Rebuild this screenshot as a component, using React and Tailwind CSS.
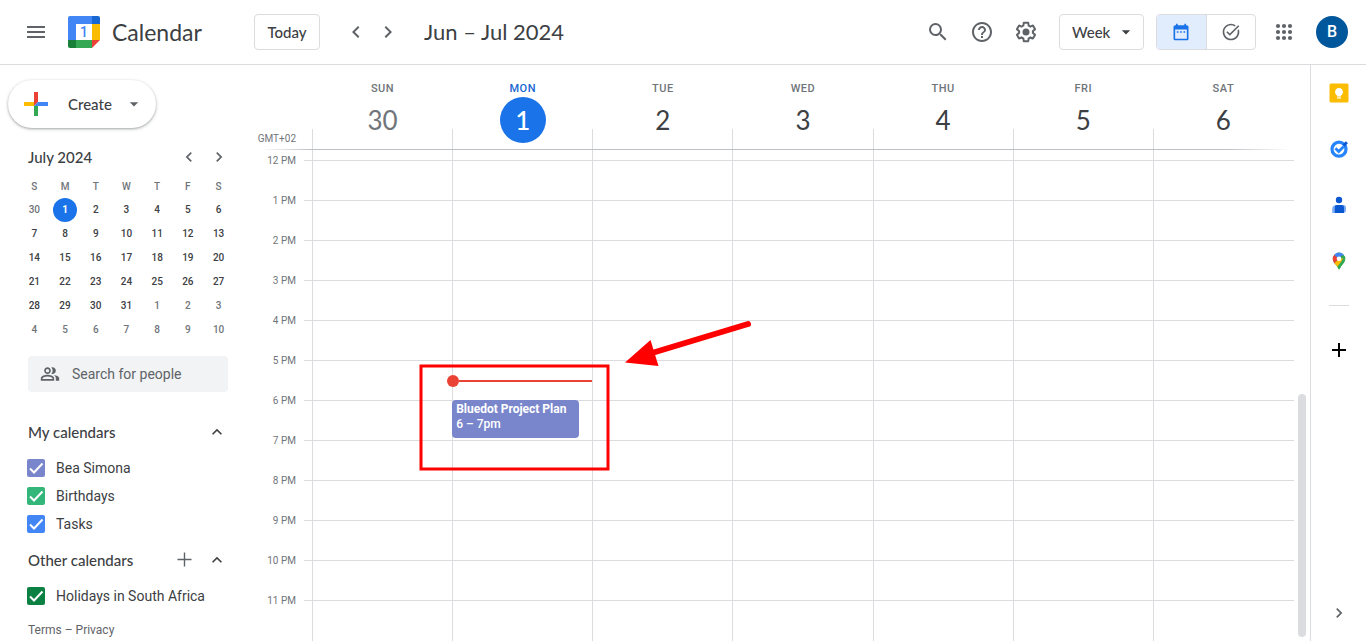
import React from "react";
import {
  MdMenu,
  MdSearch,
  MdHelpOutline,
  MdChevronLeft,
  MdChevronRight,
  MdArrowDropDown,
  MdDateRange,
  MdTaskAlt,
  MdOutlinePeopleAlt,
  MdKeyboardArrowUp,
  MdAdd,
} from "react-icons/md";

const brand = "font-['Lato','Open_Sans',sans-serif]";

const weekDays = [
  { name: "SUN", date: 30, past: true },
  { name: "MON", date: 1, today: true },
  { name: "TUE", date: 2 },
  { name: "WED", date: 3 },
  { name: "THU", date: 4 },
  { name: "FRI", date: 5 },
  { name: "SAT", date: 6 },
];

const hours = ["12 PM", "1 PM", "2 PM", "3 PM", "4 PM", "5 PM", "6 PM", "7 PM", "8 PM", "9 PM", "10 PM", "11 PM"];

const monthWeeks = [
  [30, 1, 2, 3, 4, 5, 6],
  [7, 8, 9, 10, 11, 12, 13],
  [14, 15, 16, 17, 18, 19, 20],
  [21, 22, 23, 24, 25, 26, 27],
  [28, 29, 30, 31, 1, 2, 3],
  [4, 5, 6, 7, 8, 9, 10],
];

const inMonth = (week, date) => !(week === 0 && date > 20) && !(week > 3 && date < 20);

function CalendarLogo() {
  return (
    <svg className="size-8" viewBox="0 0 32 32" aria-hidden="true">
      <path d="M2 0h22v8H8v16H0V2a2 2 0 0 1 2-2z" fill="#4285f4" />
      <path d="M24 0h6a2 2 0 0 1 2 2v6h-8z" fill="#1967d2" />
      <path d="M24 8h8v16h-8z" fill="#fbbc04" />
      <path d="M8 24h16v8H8z" fill="#34a853" />
      <path d="M0 24h8v8H2a2 2 0 0 1-2-2z" fill="#188038" />
      <path d="M24 24h8l-8 8z" fill="#ea4335" />
      <text x="16" y="21" textAnchor="middle" fontSize="14" fontFamily="Roboto, sans-serif" fontWeight="500" fill="#4285f4">
        1
      </text>
    </svg>
  );
}

function SettingsIcon() {
  return (
    <svg className="size-6" viewBox="0 0 24 24" fill="currentColor" aria-hidden="true">
      <path d="M13.85 22.25h-3.7c-.74 0-1.36-.54-1.45-1.27l-.27-1.89c-.27-.14-.53-.29-.79-.46l-1.8.72c-.7.26-1.47-.03-1.81-.65L2.2 15.53c-.35-.66-.2-1.44.36-1.88l1.53-1.19c-.01-.15-.02-.3-.02-.46 0-.15.01-.31.02-.46l-1.52-1.19c-.59-.45-.74-1.26-.37-1.88l1.85-3.19c.34-.62 1.11-.9 1.79-.63l1.81.73c.26-.17.52-.32.78-.46l.27-1.91c.09-.7.71-1.25 1.44-1.25h3.7c.74 0 1.36.54 1.45 1.27l.27 1.89c.27.14.53.29.79.46l1.8-.72c.71-.26 1.48.03 1.82.65l1.84 3.18c.36.66.2 1.44-.36 1.88l-1.52 1.19c.01.15.02.3.02.46s-.01.31-.02.46l1.52 1.19c.56.45.72 1.23.37 1.86l-1.86 3.22c-.34.62-1.11.9-1.8.63l-1.8-.72c-.26.17-.52.32-.78.46l-.27 1.91c-.1.68-.72 1.22-1.46 1.22zm-3.23-2h2.76l.37-2.55.53-.22c.44-.18.88-.44 1.34-.78l.45-.34 2.38.96 1.38-2.4-2.03-1.58.07-.56c.03-.26.06-.51.06-.78s-.03-.53-.06-.78l-.07-.56 2.03-1.58-1.39-2.4-2.39.96-.45-.35c-.42-.32-.87-.58-1.33-.77l-.52-.22-.37-2.55h-2.76l-.37 2.55-.53.21c-.44.19-.88.44-1.34.79l-.45.33-2.38-.95-1.39 2.39 2.03 1.58-.07.56a7 7 0 0 0-.06.79c0 .26.02.53.06.78l.07.56-2.03 1.58 1.38 2.4 2.39-.96.45.35c.43.33.86.58 1.33.77l.53.22.38 2.55z" />
      <circle cx="12" cy="12" r="3.5" />
    </svg>
  );
}

function AppsIcon() {
  return (
    <svg className="size-6" viewBox="0 0 24 24" fill="currentColor" aria-hidden="true">
      {[6, 12, 18].map((y) => [6, 12, 18].map((x) => <circle key={`${x}-${y}`} cx={x} cy={y} r="2.1" />))}
    </svg>
  );
}

function CreatePlus() {
  return (
    <svg className="size-6" viewBox="0 0 24 24" aria-hidden="true">
      <path d="M10 0h4v10l-4 4z" fill="#ea4335" />
      <path d="M0 10h10v4H0z" fill="#fbbc04" />
      <path d="M14 10h10v4H10z" fill="#4285f4" />
      <path d="M10 14h4v10h-4z" fill="#34a853" />
    </svg>
  );
}

function ThinPlus() {
  return (
    <svg className="size-5" viewBox="0 0 20 20" fill="none" stroke="currentColor" strokeWidth="1.4" aria-hidden="true">
      <path d="M9.500 2.500v14M2.500 9.500h14" />
    </svg>
  );
}

function KeepIcon() {
  return (
    <svg className="size-5" viewBox="0 0 20 20" aria-hidden="true">
      <rect x="0.5" y="0.5" width="19" height="19" rx="1.5" fill="#fbbc04" />
      <path d="M10 5a4 4 0 0 0-2 7.400v1h4v-1A4 4 0 0 0 10 5z" fill="#fff" />
      <path d="M8 14.300h4v1.200H8z" fill="#fff" />
    </svg>
  );
}

function TasksIcon() {
  return (
    <svg className="size-5" viewBox="0 0 20 20" fill="none" aria-hidden="true">
      <circle cx="10" cy="10.2" r="7" stroke="#2684fc" strokeWidth="3.2" />
      <path d="M6.400 9.200l3.300 3.300 5-5" stroke="#2684fc" strokeWidth="2.8" />
      <path d="M13.600 5.600l3.300-3.300 2 2-3.300 3.500z" fill="#0b57d0" />
    </svg>
  );
}

function ContactsIcon() {
  return (
    <svg className="size-5" viewBox="0 0 20 20" aria-hidden="true">
      <circle cx="10" cy="5" r="3.2" fill="#0b57d0" />
      <path d="M6.800 10H14a3 3 0 0 1 3 3v2.600a2.400 2.400 0 0 1-2.400 2.400H3.200v-4A4 4 0 0 1 6.800 10z" fill="#7baaf7" />
      <path d="M8.200 10h4.400a2.400 2.400 0 0 1 2.400 2.400V18H5.800v-5.600A2.400 2.400 0 0 1 8.200 10z" fill="#0b57d0" />
    </svg>
  );
}

function MapsIcon() {
  return (
    <svg className="size-5" viewBox="0 0 20 20" aria-hidden="true">
      <defs>
        <clipPath id="map-pin">
          <path d="M10 1.600a6.200 6.200 0 0 1 6.200 6.200c0 2-.9 3.400-2.100 4.900-1.600 2-2.600 3.200-3.300 5.100-.3.900-1.300.900-1.600 0-.7-1.900-1.700-3.100-3.300-5.100C4.700 11.200 3.800 9.800 3.800 7.800A6.200 6.200 0 0 1 10 1.600z" />
        </clipPath>
      </defs>
      <g clipPath="url(#map-pin)">
        <path d="M0 0h20v20H0z" fill="#34a853" />
        <path d="M10 8l-5.200 6L0 10V0l6 4z" fill="#ea4335" />
        <path d="M10 8l-5.500 5L8 16l7.500-9z" fill="#fbbc04" />
        <path d="M10 8L5 3.800 8 0h9l-1.500 4.200-3 .4z" fill="#4285f4" />
        <path d="M9.500 15.500L16 4l4 8-8 8z" fill="#34a853" />
      </g>
      <circle cx="10" cy="7.8" r="2.3" fill="#fff" />
    </svg>
  );
}

function Header() {
  return (
    <header className="flex h-[65px] shrink-0 items-center border-b border-[#dadce0] pr-[18px] text-[#5f6368]">
      <div className="flex w-[254px] shrink-0 items-center pl-3">
        <button className="flex size-12 items-center justify-center" aria-label="Main menu">
          <MdMenu className="size-6" />
        </button>
        <a href="#" className="ml-2 flex items-center gap-3">
          <CalendarLogo />
          <span className={`${brand} text-[23px] leading-7 text-[#3c4043]`}>Calendar</span>
        </a>
      </div>
      <button className={`${brand} h-9 w-[66px] rounded border border-[#dadce0] text-[15px] font-medium text-[#3c4043]`}>Today</button>
      <button className="ml-5 flex size-8 items-center justify-center" aria-label="Previous week">
        <MdChevronLeft className="size-6" />
      </button>
      <button className="flex size-8 items-center justify-center" aria-label="Next week">
        <MdChevronRight className="size-6" />
      </button>
      <h1 className={`${brand} ml-5 text-[22px] leading-7 whitespace-nowrap text-[#3c4043]`}>Jun – Jul 2024</h1>
      <div className="ml-auto flex items-center">
        <button className="flex h-12 w-11 items-center justify-center" aria-label="Search">
          <MdSearch className="size-6" />
        </button>
        <button className="flex h-12 w-11 items-center justify-center" aria-label="Support">
          <MdHelpOutline className="size-6" />
        </button>
        <button className="flex h-12 w-11 items-center justify-center" aria-label="Settings">
          <SettingsIcon />
        </button>
        <div className="ml-[11px] grid items-center">
          <select
            aria-label="View"
            defaultValue="Week"
            className={`${brand} col-start-1 row-start-1 h-9 w-[85px] appearance-none rounded border border-[#dadce0] bg-white pl-3 text-[15px] font-medium text-[#3c4043]`}
          >
            <option>Day</option>
            <option>Week</option>
            <option>Month</option>
          </select>
          <MdArrowDropDown className="pointer-events-none col-start-1 row-start-1 mr-2 size-5 justify-self-end text-[#3c4043]" />
        </div>
        <div className="ml-3 flex h-9 w-[100px] overflow-hidden rounded border border-[#dadce0]">
          <button className="flex flex-1 items-center justify-center border-r border-[#dadce0] bg-[#e1edfd] text-[#1a73e8]" aria-label="Calendar view">
            <MdDateRange className="size-5" />
          </button>
          <button className="flex flex-1 items-center justify-center" aria-label="Tasks view">
            <MdTaskAlt className="size-5" />
          </button>
        </div>
        <button className="ml-2 flex size-10 items-center justify-center" aria-label="Google apps">
          <AppsIcon />
        </button>
        <button className="ml-3 size-8 rounded-full bg-[#01579b] font-['Roboto',sans-serif] text-base leading-8 font-medium text-white" aria-label="Account">
          B
        </button>
      </div>
    </header>
  );
}

function MiniMonth() {
  return (
    <section className="mt-[15px]">
      <div className="flex h-7 items-center pr-[22px] pl-7">
        <h2 className={`${brand} text-[15px] font-medium text-[#3c4043]`}>July 2024</h2>
        <button className="ml-auto flex h-7 w-[30px] items-center justify-center" aria-label="Previous month">
          <MdChevronLeft className="size-5" />
        </button>
        <button className="flex h-7 w-[30px] items-center justify-center" aria-label="Next month">
          <MdChevronRight className="size-5" />
        </button>
      </div>
      <table className="mt-1 ml-[19px] w-[215px] table-fixed text-center text-[10px] leading-4 font-medium">
        <thead>
          <tr className="h-[23px] text-[#70757a]">
            {["S", "M", "T", "W", "T", "F", "S"].map((d, i) => (
              <th key={i} className="p-0 font-medium">
                {d}
              </th>
            ))}
          </tr>
        </thead>
        <tbody>
          {monthWeeks.map((week, w) => (
            <tr key={w}>
              {week.map((date) => (
                <td key={date} className="h-6 p-0">
                  <button
                    className={
                      w === 0 && date === 1
                        ? "mx-auto block size-6 rounded-full bg-[#1a73e8] font-bold text-white"
                        : inMonth(w, date)
                          ? "mx-auto block size-6 rounded-full text-[#3c4043]"
                          : "mx-auto block size-6 rounded-full text-[#70757a]"
                    }
                  >
                    {date}
                  </button>
                </td>
              ))}
            </tr>
          ))}
        </tbody>
      </table>
    </section>
  );
}

function CalendarToggle({ name, color }) {
  return (
    <label className="flex h-7 items-center gap-[11px] pl-[27px] text-sm text-[#3c4043]">
      <span className="grid size-[18px]">
        <input type="checkbox" defaultChecked className={`col-start-1 row-start-1 size-[18px] appearance-none rounded-xs ${color}`} />
        <svg className="pointer-events-none col-start-1 row-start-1 size-[18px]" viewBox="0 0 18 18" fill="none" aria-hidden="true">
          <path d="M3 9.500l4 4 8.500-9" stroke="#fff" strokeWidth="2" />
        </svg>
      </span>
      {name}
    </label>
  );
}

function Sidebar() {
  return (
    <aside className="w-64 shrink-0 text-[#5f6368]">
      <button className={`${brand} mt-[15px] ml-2 flex h-12 w-[148px] items-center rounded-full pl-4 text-[15px] font-medium text-[#3c4043] shadow-[0_1px_2px_0_rgba(60,64,67,0.30),0_1px_3px_1px_rgba(60,64,67,0.15)]`}>
        <CreatePlus />
        <span className="ml-5">Create</span>
        <MdArrowDropDown className="mr-3 ml-auto size-5 text-[#5f6368]" />
      </button>
      <MiniMonth />
      <label className="mt-[14px] ml-7 flex h-9 w-[200px] items-center gap-3 rounded bg-[#f1f3f4] pl-3">
        <MdOutlinePeopleAlt className="size-5 shrink-0" />
        <input
          type="text"
          aria-label="Search for people"
          placeholder="Search for people"
          className="w-full min-w-0 bg-transparent text-sm outline-none placeholder:text-[#5f6368]"
        />
      </label>
      <section className="mt-6">
        <div className="flex h-8 items-center pr-[29px] pl-7">
          <h2 className={`${brand} text-[15px] font-medium text-[#3c4043]`}>My calendars</h2>
          <button className="ml-auto text-[#3c4043]" aria-label="Collapse my calendars">
            <MdKeyboardArrowUp className="size-5" />
          </button>
        </div>
        <div className="mt-1.5">
          <CalendarToggle name="Bea Simona" color="bg-[#7986cb]" />
          <CalendarToggle name="Birthdays" color="bg-[#33b679]" />
          <CalendarToggle name="Tasks" color="bg-[#4285f4]" />
        </div>
      </section>
      <section className="mt-1.5">
        <div className="flex h-8 items-center pr-[29px] pl-7">
          <h2 className={`${brand} text-[15px] font-medium text-[#3c4043]`}>Other calendars</h2>
          <button className="ml-auto" aria-label="Add other calendars">
            <ThinPlus />
          </button>
          <button className="ml-3 text-[#3c4043]" aria-label="Collapse other calendars">
            <MdKeyboardArrowUp className="size-5" />
          </button>
        </div>
        <div className="mt-1.5">
          <CalendarToggle name="Holidays in South Africa" color="bg-[#0b8043]" />
        </div>
      </section>
      <p className="mt-2.5 ml-7 text-xs leading-5 text-[#5f6368]">
        <a href="#">Terms</a> – <a href="#">Privacy</a>
      </p>
    </aside>
  );
}

function WeekHeader() {
  return (
    <div className="shrink-0">
      <div className="flex h-[84px] pr-[17px]">
        <div className="flex w-14 shrink-0 items-end justify-end pr-4 text-[10px] leading-5 text-[#70757a]">GMT+02</div>
        <div className="grid flex-1 grid-cols-7">
          {weekDays.map((day) => (
            <div key={day.name} className="flex">
              <div className="mt-auto h-5 w-px bg-[#dadce0]" />
              <div className="flex flex-1 flex-col items-center pt-4">
                <span className={day.today ? "text-[11px] leading-4 font-medium tracking-wider text-[#1967d2]" : "text-[11px] leading-4 font-medium tracking-wider text-[#70757a]"}>{day.name}</span>
                <span
                  className={
                    day.today
                      ? `${brand} flex size-[46px] items-center justify-center rounded-full bg-[#1a73e8] text-[26px] font-medium text-white`
                      : day.past
                        ? `${brand} flex size-[46px] items-center justify-center text-[26px] text-[#70757a]`
                        : `${brand} flex size-[46px] items-center justify-center text-[26px] text-[#3c4043]`
                  }
                >
                  {day.date}
                </span>
              </div>
            </div>
          ))}
        </div>
      </div>
      <div className="mr-5 ml-1 h-px bg-[linear-gradient(to_right,transparent,#bdc1c6_5%,#bdc1c6_94%,transparent)]" />
    </div>
  );
}

function EventBlock() {
  return (
    <button className="absolute top-[250px] -left-px flex h-[38px] w-[127px] flex-col items-start rounded bg-[#7986cb] px-1 pt-0.5 text-left text-xs leading-[15px] whitespace-nowrap text-white">
      <span className="font-bold">Bluedot Project Plan</span>
      <span className="font-medium">6 – 7pm</span>
    </button>
  );
}

function NowLine() {
  return (
    <div className="absolute top-[225px] -left-1.5 flex w-full items-center">
      <span className="size-3 shrink-0 rounded-full bg-[#ea4335]" />
      <span className="-mr-1.5 h-0.5 flex-1 bg-[#ea4335]" />
    </div>
  );
}

function Annotation() {
  return (
    <svg className="pointer-events-none absolute top-[160px] left-[-41px] h-[170px] w-[350px]" viewBox="0 0 350 170" fill="none" aria-hidden="true">
      <rect x="9" y="56" width="187" height="103" stroke="#f00" strokeWidth="3" />
      <path d="M240 43L336 14" stroke="#f00" strokeWidth="6" strokeLinecap="round" />
      <path d="M213 52.500l25.500-22.500 8 26z" fill="#f00" />
    </svg>
  );
}

function WeekGrid() {
  return (
    <div className="flex min-h-0 flex-1">
      <div className="grid min-w-0 flex-1 overflow-hidden">
        <div className="col-start-1 row-start-1">
          {hours.map((hour) => (
            <div key={hour} className="flex h-10">
              <div className="w-10 shrink-0 text-right text-[10px] leading-[22px] text-[#70757a]">{hour}</div>
              <div className="mt-2.5 ml-2 flex-1 border-t border-[#dadce0]" />
            </div>
          ))}
        </div>
        <div className="col-start-1 row-start-1 mr-px ml-14 grid grid-cols-7">
          {weekDays.map((day) => (
            <div key={day.name} className={day.today ? "relative z-10 border-l border-[#dadce0]" : "border-l border-[#dadce0]"}>
              {day.today && (
                <>
                  <NowLine />
                  <EventBlock />
                  <Annotation />
                </>
              )}
            </div>
          ))}
        </div>
      </div>
      <div className="flex w-4 shrink-0 flex-col items-center pb-1">
        <div className="mt-auto h-1/2 w-2 rounded-full bg-[#dadce0]" />
      </div>
    </div>
  );
}

function AppRail() {
  const item = "flex h-14 w-full items-center justify-center";
  return (
    <nav className="flex w-14 shrink-0 flex-col items-center border-l border-[#dadce0]" aria-label="Side panel">
      <button className={item} aria-label="Keep">
        <KeepIcon />
      </button>
      <button className={item} aria-label="Tasks">
        <TasksIcon />
      </button>
      <button className={item} aria-label="Contacts">
        <ContactsIcon />
      </button>
      <button className={item} aria-label="Maps">
        <MapsIcon />
      </button>
      <div className="my-4 h-px w-5 shrink-0 bg-[#dadce0]" />
      <button className={item} aria-label="Get add-ons">
        <MdAdd className="size-6 text-black" />
      </button>
      <button className={`${item} mt-auto text-[#5f6368]`} aria-label="Hide side panel">
        <MdChevronRight className="size-5" />
      </button>
    </nav>
  );
}

export default function App() {
  return (
    <div className="flex h-screen flex-col overflow-hidden bg-white font-['Roboto',sans-serif] text-[#3c4043]">
      <Header />
      <div className="flex min-h-0 flex-1">
        <Sidebar />
        <main className="flex min-w-0 flex-1 flex-col">
          <WeekHeader />
          <WeekGrid />
        </main>
        <AppRail />
      </div>
    </div>
  );
}
